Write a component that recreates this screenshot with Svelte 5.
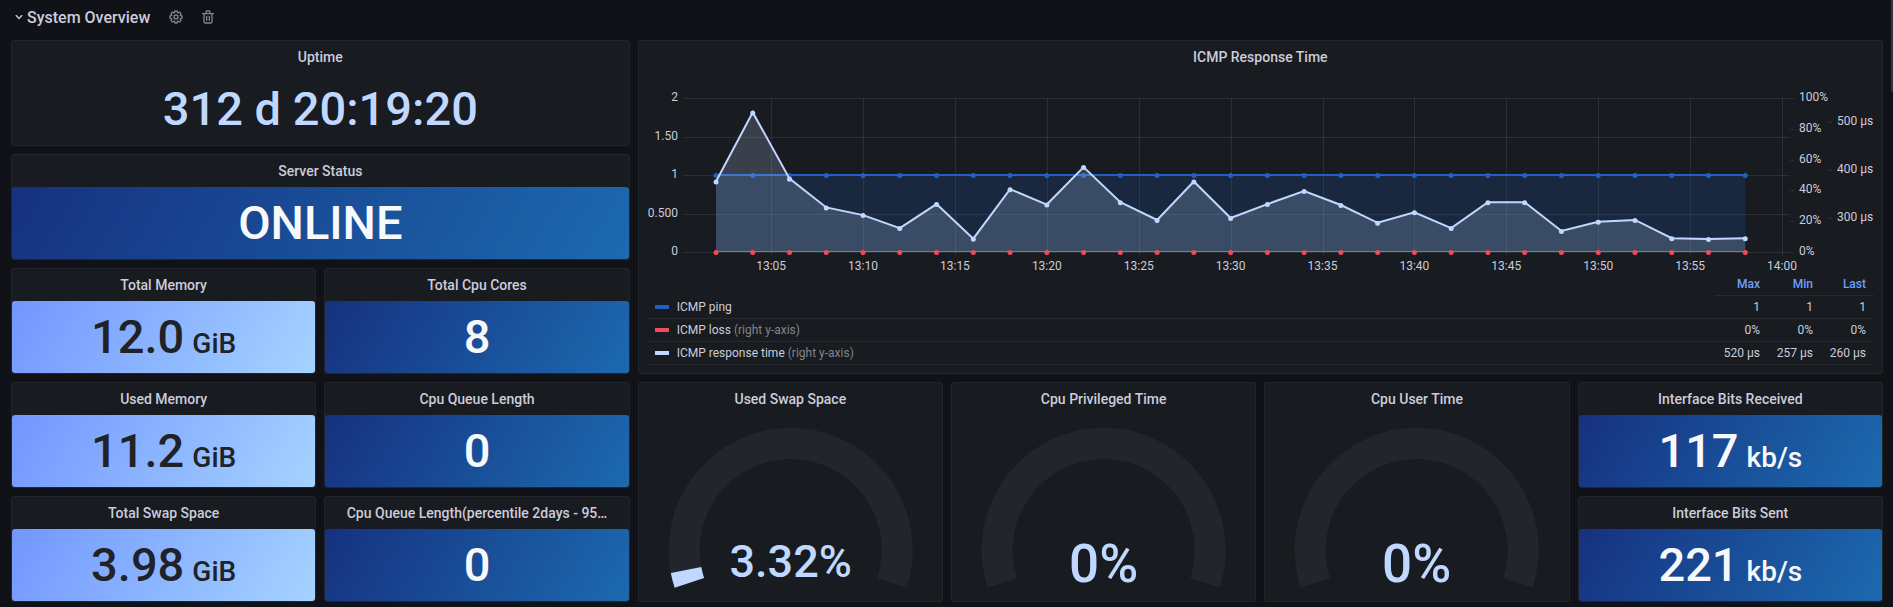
<script>
  const left = [
    { title: 'Uptime', value: '312 d 20:19:20', tone: 'plain', area: 'uptime' },
    { title: 'Server Status', value: 'ONLINE', tone: 'deep', area: 'status' },
    { title: 'Total Memory', value: '12.0', unit: 'GiB', tone: 'light', area: 'totalmem' },
    { title: 'Total Cpu Cores', value: '8', tone: 'deep', area: 'cores' },
    { title: 'Used Memory', value: '11.2', unit: 'GiB', tone: 'light', area: 'usedmem' },
    { title: 'Cpu Queue Length', value: '0', tone: 'deep', area: 'queue' },
    { title: 'Total Swap Space', value: '3.98', unit: 'GiB', tone: 'light', area: 'swap' },
    { title: 'Cpu Queue Length(percentile 2days - 95…', value: '0', tone: 'deep', area: 'queue95' },
  ];
  const network = [
    { title: 'Interface Bits Received', value: '117', unit: 'kb/s', tone: 'deep', area: 'received' },
    { title: 'Interface Bits Sent', value: '221', unit: 'kb/s', tone: 'deep', area: 'sent' },
  ];
  const gauges = [
    { title: 'Used Swap Space', percent: 3.32, size: 45, baseline: 162, area: 'gswap' },
    { title: 'Cpu Privileged Time', percent: 0, size: 53, baseline: 167, area: 'gpriv' },
    { title: 'Cpu User Time', percent: 0, size: 53, baseline: 167, area: 'guser' },
  ];

  // Gauge arcs sweep 216 degrees, starting 18 degrees below the horizontal on the left.
  const START = 162;
  function point(r, deg) {
    const a = (deg * Math.PI) / 180;
    return `${(151 + r * Math.cos(a)).toFixed(2)} ${(135 + r * Math.sin(a)).toFixed(2)}`;
  }
  function arc(percent) {
    const sweep = (216 * percent) / 100;
    const end = START + sweep;
    const large = sweep > 180 ? 1 : 0;
    return `M${point(122, START)}A122 122 0 ${large} 1 ${point(122, end)}L${point(91, end)}A91 91 0 ${large} 0 ${point(91, START)}Z`;
  }

  // ICMP chart: one sample every two minutes from 13:02, response time in µs.
  const response = [
    376, 520, 382, 322, 306, 279, 329, 257, 360, 328, 406, 333, 296, 376, 300,
    329, 356, 327, 290, 312, 279, 333, 333, 273, 292, 296, 258, 256, 258,
  ];
  const BOTTOM = 179;
  let width = $state(1227);
  const px = (minute) => 69 + ((width - 161) * (minute - 2)) / 58;
  const ms = (v) => 145 - (v - 300) * 0.48;
  const minutes = response.map((_, i) => 2 + i * 2);
  let line = $derived(response.map((v, i) => `${px(minutes[i])},${ms(v)}`).join(' '));
  const yTicks = [
    ['2', 25], ['1.50', 64], ['1', 102], ['0.500', 141], ['0', 179],
  ];
  const lossTicks = [
    ['100%', 25], ['80%', 56], ['60%', 87], ['40%', 117], ['20%', 148], ['0%', 179],
  ];
  const timeTicks = [['500 µs', 49], ['400 µs', 97], ['300 µs', 145]];
  const xTicks = [5, 10, 15, 20, 25, 30, 35, 40, 45, 50, 55, 60];
  const clock = (m) => (m === 60 ? '14:00' : `13:${String(m).padStart(2, '0')}`);

  const legend = [
    { name: 'ICMP ping', color: '#1f60c4', stats: ['1', '1', '1'] },
    { name: 'ICMP loss', note: '(right y-axis)', color: '#f2495c', stats: ['0%', '0%', '0%'] },
    { name: 'ICMP response time', note: '(right y-axis)', color: '#c0d8ff', stats: ['520 µs', '257 µs', '260 µs'] },
  ];
</script>

{#snippet stat(p)}
  <section class="panel" style:grid-area={p.area}>
    <h2>{p.title}</h2>
    <div class="stat {p.tone}">
      <span class="value">{p.value}</span>{#if p.unit}<span class="unit">{p.unit}</span>{/if}
    </div>
  </section>
{/snippet}

<header class="row-header">
  <button class="toggle" type="button">
    <svg viewBox="0 0 24 24" width="16" height="16" aria-hidden="true"><path d="M17,9.17a1,1,0,0,0-1.41,0L12,12.71,8.46,9.17a1,1,0,0,0-1.41,0,1,1,0,0,0,0,1.42l4.24,4.24a1,1,0,0,0,1.42,0L17,10.59A1,1,0,0,0,17,9.17Z" /></svg>
    <span>System Overview</span>
  </button>
  <button class="tool" type="button" aria-label="Row options">
    <svg viewBox="0 0 24 24" width="16" height="16" aria-hidden="true"><path d="M21.32,9.55l-1.89-.63.89-1.78A1,1,0,0,0,20.13,6L18,3.87a1,1,0,0,0-1.15-.19l-1.78.89-.63-1.89A1,1,0,0,0,13.5,2h-3a1,1,0,0,0-.95.68L8.92,4.57,7.14,3.68A1,1,0,0,0,6,3.87L3.87,6a1,1,0,0,0-.19,1.15l.89,1.78-1.89.63A1,1,0,0,0,2,10.5v3a1,1,0,0,0,.68.95l1.89.63-.89,1.78A1,1,0,0,0,3.87,18L6,20.13a1,1,0,0,0,1.15.19l1.78-.89.63,1.89a1,1,0,0,0,.95.68h3a1,1,0,0,0,.95-.68l.63-1.89,1.78.89A1,1,0,0,0,18,20.13L20.13,18a1,1,0,0,0,.19-1.15l-.89-1.78,1.89-.63A1,1,0,0,0,22,13.5v-3A1,1,0,0,0,21.32,9.55ZM20,12.78l-1.2.4A2,2,0,0,0,17.64,16l.57,1.14-1.1,1.1L16,17.64a2,2,0,0,0-2.79,1.16l-.4,1.2H11.22l-.4-1.2A2,2,0,0,0,8,17.64l-1.14.57-1.1-1.1L6.36,16A2,2,0,0,0,5.2,13.18L4,12.78V11.22l1.2-.4A2,2,0,0,0,6.36,8L5.79,6.89l1.1-1.1L8,6.36A2,2,0,0,0,10.82,5.2l.4-1.2h1.56l.4,1.2A2,2,0,0,0,16,6.36l1.14-.57,1.1,1.1L17.64,8a2,2,0,0,0,1.16,2.79l1.2.4ZM12,8a4,4,0,1,0,4,4A4,4,0,0,0,12,8Zm0,6a2,2,0,1,1,2-2A2,2,0,0,1,12,14Z" /></svg>
  </button>
  <button class="tool" type="button" aria-label="Delete row">
    <svg viewBox="0 0 24 24" width="16" height="16" aria-hidden="true"><path d="M10,18a1,1,0,0,0,1-1V11a1,1,0,0,0-2,0v6A1,1,0,0,0,10,18ZM20,6H16V5a3,3,0,0,0-3-3H11A3,3,0,0,0,8,5V6H4A1,1,0,0,0,4,8H5V19a3,3,0,0,0,3,3h8a3,3,0,0,0,3-3V8h1a1,1,0,0,0,0-2ZM10,5a1,1,0,0,1,1-1h2a1,1,0,0,1,1,1V6H10Zm7,14a1,1,0,0,1-1,1H8a1,1,0,0,1-1-1V8H17Zm-3-1a1,1,0,0,0,1-1V11a1,1,0,0,0-2,0v6A1,1,0,0,0,14,18Z" /></svg>
  </button>
</header>

<main class="grid">
  {#each left as p}{@render stat(p)}{/each}

  <section class="panel" style:grid-area="chart">
    <h2>ICMP Response Time</h2>
    <div class="chart-body">
      <div class="plot" bind:clientWidth={width}>
        <svg {width} height="200" role="img" aria-label="ICMP response time over the last hour">
          <g class="gridlines">
            {#each yTicks as [, y]}<rect x="36" {y} width={Math.max(0, width - 120)} height="1" />{/each}
            {#each xTicks as m}<rect x={Math.round(px(m))} y="25" width="1" height="158" />{/each}
            {#each lossTicks as [, y]}<rect x={width - 84} {y} width="4" height="1" />{/each}
            {#each timeTicks as [, y]}<rect x={width - 46} {y} width="4" height="1" />{/each}
          </g>

          <rect class="ping-fill" x={px(2)} y="102" width={Math.max(0, px(58) - px(2))} height={BOTTOM - 102} />
          <line class="ping" x1={px(2)} x2={px(58)} y1="102" y2="102" />
          {#each minutes as m}<circle cx={px(m)} cy="102.5" r="2.5" fill="#1f60c4" />{/each}
          <polygon class="response-fill" points={`${px(2)},178 ${line} ${px(58)},178`} />
          <rect x={px(2)} y="178" width={Math.max(0, px(58) - px(2))} height="1" fill="#f2495c" />
          {#each minutes as m}<circle cx={px(m)} cy="179.5" r="2.5" fill="#f2495c" />{/each}
          <polyline class="response" points={line} />
          {#each response as v, i}<circle cx={px(minutes[i])} cy={ms(v) + 0.5} r="2.5" fill="#c0d8ff" />{/each}

          <g class="labels">
            {#each yTicks as [t, y]}<text x="31" y={y + 3} text-anchor="end">{t}</text>{/each}
            {#each lossTicks as [t, y]}<text x={width - 75} y={y + 3}>{t}</text>{/each}
            {#each timeTicks as [t, y]}<text x={width - 37} y={y + 3}>{t}</text>{/each}
            {#each xTicks as m}<text x={px(m)} y="197" text-anchor="middle">{clock(m)}</text>{/each}
          </g>
        </svg>
      </div>
      <table>
        <thead>
          <tr><td class="blank"></td><th scope="col">Max</th><th scope="col">Min</th><th scope="col">Last</th></tr>
        </thead>
        <tbody>
          {#each legend as s}
            <tr>
              <td class="series">
                <div>
                  <i style:background={s.color}></i>
                  <button type="button">{s.name}{#if s.note}<small>&nbsp;{s.note}</small>{/if}</button>
                </div>
              </td>
              {#each s.stats as v}<td>{v}</td>{/each}
            </tr>
          {/each}
        </tbody>
      </table>
    </div>
  </section>

  {#each gauges as g}
    <section class="panel" style:grid-area={g.area}>
      <h2>{g.title}</h2>
      <svg class="gauge" viewBox="0 0 302 186" role="img" aria-label={g.title}>
        <path d={arc(100)} fill="#22252b" />
        {#if g.percent > 0}<path d={arc(g.percent)} fill="#c0d8ff" />{/if}
        <text x="151" y={g.baseline} font-size={g.size} text-anchor="middle">{g.percent}%</text>
      </svg>
    </section>
  {/each}

  {#each network as p}{@render stat(p)}{/each}
</main>
<div class="scrollbar"></div>

<style>
  :global(body) {
    background: #111217;
    color: #ccccdc;
    font-family: Roboto, sans-serif;
    font-size: 14px;
  }
  button {
    background: none;
    border: 0;
    padding: 0;
    font: inherit;
    color: inherit;
    cursor: pointer;
  }
  .row-header {
    display: flex;
    align-items: center;
    gap: 16px;
    height: 34px;
    padding: 0 11px 6px;
  }
  .toggle,
  .tool {
    display: flex;
    align-items: center;
  }
  .toggle {
    padding-right: 2px;
    font-size: 16px;
    font-weight: 500;
  }
  .toggle svg,
  .tool svg {
    fill: currentColor;
  }
  .tool {
    color: #83848d;
  }
  .grid {
    display: grid;
    grid-template-columns: repeat(6, minmax(0, 1fr));
    grid-auto-rows: 106px;
    gap: 8px;
    padding: 0 10px 5px 11px;
    grid-template-areas:
      'uptime uptime chart chart chart chart'
      'status status chart chart chart chart'
      'totalmem cores chart chart chart chart'
      'usedmem queue gswap gpriv guser received'
      'swap queue95 gswap gpriv guser sent';
  }
  .panel {
    display: flex;
    flex-direction: column;
    box-sizing: border-box;
    min-width: 0;
    border: 1px solid #222529;
    border-radius: 3px;
    background: #181b1f;
  }
  h2 {
    flex: none;
    margin: 0;
    padding: 0 19px;
    font-size: 14px;
    font-weight: 500;
    line-height: 32px;
    text-align: center;
    white-space: nowrap;
    overflow: hidden;
    text-overflow: ellipsis;
  }
  .stat {
    flex: 1;
    display: flex;
    align-items: baseline;
    justify-content: center;
    gap: 8px;
    border-radius: 3px;
    font-weight: 500;
    white-space: nowrap;
  }
  .value {
    font-size: 47px;
    line-height: 72px;
  }
  .unit {
    font-size: 28px;
    line-height: 32px;
  }
  .plain {
    color: #c0d8ff;
  }
  .deep {
    background: linear-gradient(120deg, #163180, #1c6aaf);
    color: #f7f8fa;
  }
  .light {
    background: linear-gradient(120deg, #7296ff, #a5d3ff);
    color: #202226;
  }
  .chart-body {
    flex: 1;
    padding: 0 8px;
    font-size: 12px;
  }
  .plot {
    height: 200px;
    overflow: hidden;
  }
  .plot svg {
    display: block;
  }
  .gridlines {
    fill: rgb(240 250 255 / 9%);
  }
  .labels {
    fill: #ccccdc;
    font-size: 12px;
  }
  .ping {
    stroke: #1f60c4;
    stroke-width: 2;
  }
  .ping-fill {
    fill: rgb(31 96 196 / 20%);
  }
  .response {
    fill: none;
    stroke: #c0d8ff;
    stroke-width: 2;
  }
  .response-fill {
    fill: rgb(192 216 255 / 20%);
  }
  table {
    width: 100%;
    border-collapse: separate;
    border-spacing: 0;
  }
  th,
  td {
    box-sizing: border-box;
    width: 1px;
    height: 23px;
    padding: 0 8px;
    border-bottom: 1px solid #26292d;
    text-align: right;
    white-space: nowrap;
    line-height: 22px;
  }
  th {
    min-width: 53px;
    color: #6e9fff;
    font-weight: 500;
  }
  .series {
    width: auto;
  }
  .blank {
    width: auto;
    border: 0;
  }
  .series div {
    display: flex;
    align-items: center;
    gap: 8px;
  }
  .series i {
    width: 14px;
    height: 4px;
  }
  small {
    font-size: 12px;
    color: #83848d;
  }
  .gauge {
    display: block;
    width: 100%;
    flex: 1;
    min-height: 0;
  }
  .gauge text {
    fill: #c0d8ff;
    font-weight: 500;
  }
  .scrollbar {
    position: fixed;
    top: 0;
    right: 0;
    width: 2px;
    height: 92px;
    border-radius: 0 0 0 2px;
    background: #34363c;
  }
</style>
